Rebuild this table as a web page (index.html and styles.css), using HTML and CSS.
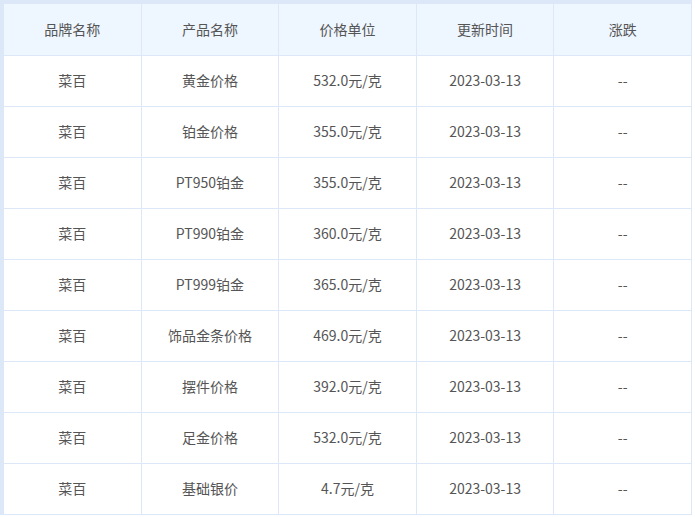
FILE: index.html
```html
<!DOCTYPE html>
<html lang="zh-CN">
<head>
<meta charset="utf-8">
<link rel="stylesheet" href="styles.css">
</head>
<body>
<div class="price-table">
  <div class="cell head">品牌名称</div><div class="cell head">产品名称</div><div class="cell head">价格单位</div><div class="cell head">更新时间</div><div class="cell head">涨跌</div>
  <div class="cell">菜百</div><div class="cell">黄金价格</div><div class="cell">532.0元/克</div><div class="cell">2023-03-13</div><div class="cell">--</div>
  <div class="cell">菜百</div><div class="cell">铂金价格</div><div class="cell">355.0元/克</div><div class="cell">2023-03-13</div><div class="cell">--</div>
  <div class="cell">菜百</div><div class="cell">PT950铂金</div><div class="cell">355.0元/克</div><div class="cell">2023-03-13</div><div class="cell">--</div>
  <div class="cell">菜百</div><div class="cell">PT990铂金</div><div class="cell">360.0元/克</div><div class="cell">2023-03-13</div><div class="cell">--</div>
  <div class="cell">菜百</div><div class="cell">PT999铂金</div><div class="cell">365.0元/克</div><div class="cell">2023-03-13</div><div class="cell">--</div>
  <div class="cell">菜百</div><div class="cell">饰品金条价格</div><div class="cell">469.0元/克</div><div class="cell">2023-03-13</div><div class="cell">--</div>
  <div class="cell">菜百</div><div class="cell">摆件价格</div><div class="cell">392.0元/克</div><div class="cell">2023-03-13</div><div class="cell">--</div>
  <div class="cell">菜百</div><div class="cell">足金价格</div><div class="cell">532.0元/克</div><div class="cell">2023-03-13</div><div class="cell">--</div>
  <div class="cell">菜百</div><div class="cell">基础银价</div><div class="cell">4.7元/克</div><div class="cell">2023-03-13</div><div class="cell">--</div>
</div>
</body>
</html>
```
FILE: styles.css
```css
html, body {
  margin: 0;
  padding: 0;
  background: #ffffff;
}
.price-table {
  width: 692px;
  box-sizing: border-box;
  display: grid;
  grid-template-columns: repeat(5, 1fr);
  grid-template-rows: 52px;
  grid-auto-rows: 51px;
  border-left: 4px solid #dce8f8;
  border-top: 4px solid #dce8f8;
  font-family: "Noto Sans CJK SC", "Microsoft YaHei", sans-serif;
  font-size: 14px;
  color: #555555;
}
.cell {
  display: flex;
  align-items: center;
  justify-content: center;
  padding-bottom: 2px;
  border-right: 1px solid #dce8f8;
  border-bottom: 1px solid #dce8f8;
  white-space: nowrap;
}
.cell.head {
  background: #eef6ff;
}
```
